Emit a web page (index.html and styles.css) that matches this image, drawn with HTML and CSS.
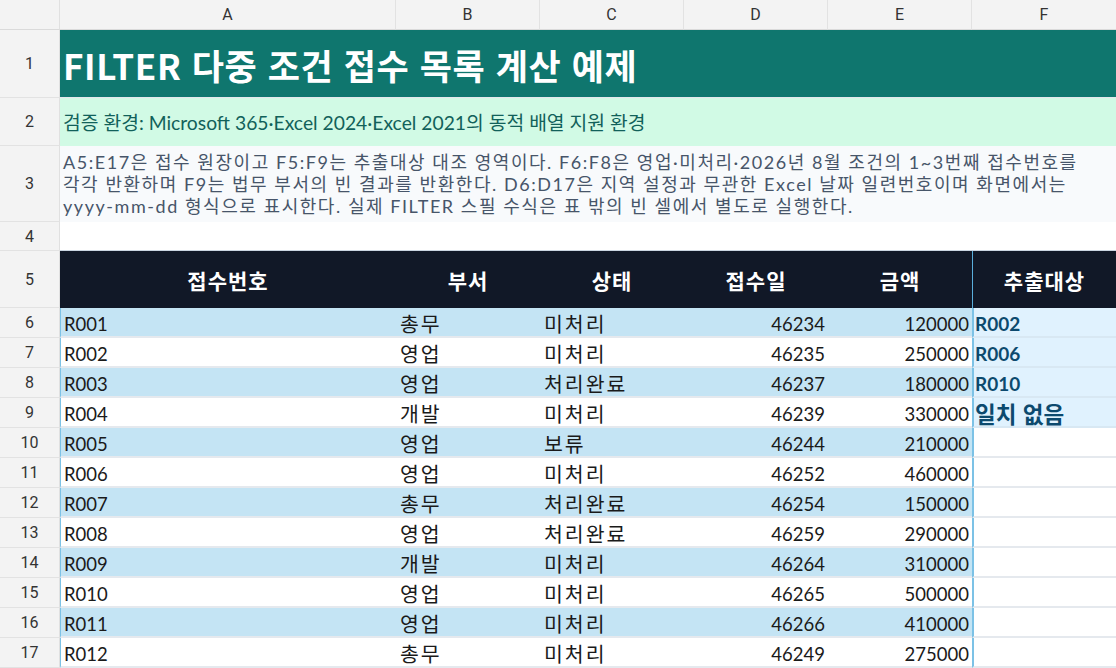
FILE: index.html
```html
<!DOCTYPE html>
<html lang="ko">
<head>
<meta charset="utf-8">
<link rel="stylesheet" href="styles.css">
</head>
<body>
<div class="sheet">
  <div class="corner"></div>
  <div class="colh">A</div><div class="colh">B</div><div class="colh">C</div><div class="colh">D</div><div class="colh">E</div><div class="colh last">F</div>

  <div class="rowh">1</div>
  <div class="title span">FILTER 다중 조건 접수 목록 계산 예제</div>

  <div class="rowh">2</div>
  <div class="env span">검증 환경: Microsoft 365·Excel 2024·Excel 2021의 동적 배열 지원 환경</div>

  <div class="rowh">3</div>
  <div class="note span">
    <span class="line">A5:E17은 접수 원장이고 F5:F9는 추출대상 대조 영역이다. F6:F8은 영업·미처리·2026년 8월 조건의 1~3번째 접수번호를</span>
    <span class="line">각각 반환하며 F9는 법무 부서의 빈 결과를 반환한다. D6:D17은 지역 설정과 무관한 Excel 날짜 일련번호이며 화면에서는</span>
    <span class="line">yyyy-mm-dd 형식으로 표시한다. 실제 FILTER 스필 수식은 표 밖의 빈 셀에서 별도로 실행한다.</span>
  </div>

  <div class="rowh">4</div>
  <div class="blank span"></div>

  <div class="rowh">5</div>
  <div class="th">접수번호</div><div class="th">부서</div><div class="th">상태</div><div class="th">접수일</div><div class="th">금액</div><div class="th out">추출대상</div>

  <div class="rowh">6</div>
  <div class="td a blue">R001</div><div class="td ko blue">총무</div><div class="td ko blue">미처리</div><div class="td num blue">46234</div><div class="td num blue">120000</div><div class="td res">R002</div>
  <div class="rowh">7</div>
  <div class="td a">R002</div><div class="td ko">영업</div><div class="td ko">미처리</div><div class="td num">46235</div><div class="td num">250000</div><div class="td res">R006</div>
  <div class="rowh">8</div>
  <div class="td a blue">R003</div><div class="td ko blue">영업</div><div class="td ko blue">처리완료</div><div class="td num blue">46237</div><div class="td num blue">180000</div><div class="td res">R010</div>
  <div class="rowh">9</div>
  <div class="td a">R004</div><div class="td ko">개발</div><div class="td ko">미처리</div><div class="td num">46239</div><div class="td num">330000</div><div class="td res big">일치 없음</div>
  <div class="rowh">10</div>
  <div class="td a blue">R005</div><div class="td ko blue">영업</div><div class="td ko blue">보류</div><div class="td num blue">46244</div><div class="td num blue">210000</div><div class="td empty"></div>
  <div class="rowh">11</div>
  <div class="td a">R006</div><div class="td ko">영업</div><div class="td ko">미처리</div><div class="td num">46252</div><div class="td num">460000</div><div class="td empty"></div>
  <div class="rowh">12</div>
  <div class="td a blue">R007</div><div class="td ko blue">총무</div><div class="td ko blue">처리완료</div><div class="td num blue">46254</div><div class="td num blue">150000</div><div class="td empty"></div>
  <div class="rowh">13</div>
  <div class="td a">R008</div><div class="td ko">영업</div><div class="td ko">처리완료</div><div class="td num">46259</div><div class="td num">290000</div><div class="td empty"></div>
  <div class="rowh">14</div>
  <div class="td a blue">R009</div><div class="td ko blue">개발</div><div class="td ko blue">미처리</div><div class="td num blue">46264</div><div class="td num blue">310000</div><div class="td empty"></div>
  <div class="rowh">15</div>
  <div class="td a">R010</div><div class="td ko">영업</div><div class="td ko">미처리</div><div class="td num">46265</div><div class="td num">500000</div><div class="td empty"></div>
  <div class="rowh">16</div>
  <div class="td a blue">R011</div><div class="td ko blue">영업</div><div class="td ko blue">미처리</div><div class="td num blue">46266</div><div class="td num blue">410000</div><div class="td empty"></div>
  <div class="rowh">17</div>
  <div class="td a">R012</div><div class="td ko">총무</div><div class="td ko">미처리</div><div class="td num">46249</div><div class="td num">275000</div><div class="td empty"></div>
</div>
</body>
</html>
```

FILE: styles.css
```css
* { box-sizing: border-box; }
html, body { margin: 0; padding: 0; background: #ffffff; }
body { width: 1116px; height: 668px; overflow: hidden; }

.sheet {
  display: grid;
  grid-template-columns: 60px 336px 144px 144px 144px 144px 144px;
  grid-template-rows: 30px 68px 48px 76px 29px 57px repeat(12, 30px);
  font-family: Lato, "Noto Sans CJK KR", sans-serif;
}

.corner, .colh, .rowh {
  background: #f3f3f3;
  font-family: Roboto, "Liberation Sans", sans-serif;
  color: #333333;
  display: flex;
  align-items: center;
  justify-content: center;
}
.corner { border-right: 1px solid #e0e0e0; border-bottom: 1px solid #dadada; }
.colh { font-size: 16px; border-right: 1px solid #e2e2e2; border-bottom: 1px solid #dadada; }
.colh.last { border-right: none; }
.rowh { font-size: 16px; border-right: 1px solid #e0e0e0; border-bottom: 1px solid #e2e2e2; }

.span { grid-column: 2 / 8; }

.title {
  background: #0f766e;
  color: #ffffff;
  font-family: "Noto Sans CJK KR", sans-serif;
  font-weight: 700;
  font-size: 35px;
  letter-spacing: 0.6px;
  display: flex;
  align-items: center;
  padding-left: 3px;
  padding-top: 2px;
  border-bottom: 1px solid #e5e7eb;
}

.env {
  background: #d1fae5;
  color: #11615a;
  font-size: 19.3px;
  display: flex;
  align-items: center;
  padding-left: 3px;
}

.note {
  background: #f8fafc;
  color: #475569;
  font-size: 18px;
  letter-spacing: 1.55px;
  line-height: 22px;
  padding: 5px 0 0 3px;
  display: flex;
  flex-direction: column;
}
.note .line { white-space: nowrap; }

.blank { background: #ffffff; border-bottom: 1px solid #cbd5e1; }

.th {
  background: #111827;
  color: #ffffff;
  font-family: "Noto Sans CJK KR", sans-serif;
  font-weight: 700;
  font-size: 21px;
  letter-spacing: 1px;
  display: flex;
  align-items: center;
  justify-content: center;
}
.th.out { border-left: 1px solid #5aaedb; }

.td {
  font-size: 18.5px;
  color: #1a1a1a;
  display: flex;
  align-items: center;
  padding: 3px 4px 0 3px;
  white-space: nowrap;
  border-bottom: 2px solid #e5e9ee;
  background: #ffffff;
}
.td.ko {
  font-family: "Noto Sans CJK KR", sans-serif;
  font-size: 20.5px;
  letter-spacing: 2px;
  padding-top: 1px;
  padding-left: 4px;
}
.td.blue { background: #c4e4f4; }
.td.a { border-left: 1px solid #7cc2e6; }
.td.num { justify-content: flex-end; padding-right: 3px; }

.td.res {
  background: #e0f2fe;
  color: #0c4a6e;
  font-weight: 700;
  font-size: 19px;
  border-left: 2px solid #7cc2e6;
  border-bottom: 2px solid #d8e8f3;
  padding-left: 1px;
}
.td.res.big {
  font-family: "Noto Sans CJK KR", sans-serif;
  font-size: 22.5px;
  padding-top: 1px;
}
.td.empty { border-left: 2px solid #7cc2e6; }
```
